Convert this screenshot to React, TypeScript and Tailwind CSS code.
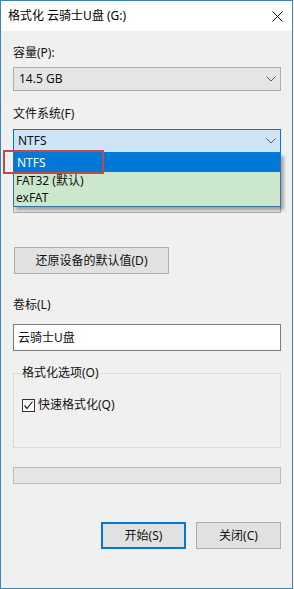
import React from 'react';

const font = { fontFamily: '"Noto Sans", "Noto Sans CJK SC", sans-serif' };

function Chevron() {
  return (
    <svg width="10" height="6" viewBox="0 0 10 6" className="shrink-0">
      <path d="M0.5 0.5 L5 5 L9.5 0.5" fill="none" stroke="#5a5a5a" strokeWidth="1" />
    </svg>
  );
}

export default function App() {
  return (
    <div
      className="w-[293px] h-[589px] border border-[#3a86b8] bg-[#f0f0f0] flex flex-col text-[12px] text-[#111] leading-[16px]"
      style={font}
    >
      {/* title bar */}
      <div className="h-[30px] bg-white flex items-center justify-between pl-[7px] pr-[9px] shrink-0">
        <span className="text-[12px] text-black">格式化 云骑士U盘 (G:)</span>
        <svg width="11" height="11" viewBox="0 0 11 11">
          <path d="M0.5 0.5 L10.5 10.5 M10.5 0.5 L0.5 10.5" stroke="#111" strokeWidth="1" />
        </svg>
      </div>

      <div className="flex flex-col pl-[12px] w-[280px]">
        <div className="mt-[14px] h-[16px]">容量(P):</div>
        <div className="mt-[6px] h-[24px] border border-[#adadad] bg-[#e5e5e5] flex items-center justify-between pl-[5px] pr-[4px]">
          <span>14.5 GB</span>
          <Chevron />
        </div>

        <div className="mt-[15px] h-[16px]">文件系统(F)</div>
        <div className="relative mt-[7px] h-[24px] z-10">
          <div className="h-[24px] border border-[#0078d7] bg-[#cce4f7] flex items-center justify-between pl-[4px] pr-[4px]">
            <span>NTFS</span>
            <Chevron />
          </div>
          <div className="absolute left-0 right-0 top-full border border-[#3d6f9c] bg-[#cce8cc] shadow-[3px_3px_3px_rgba(0,0,0,0.3)] flex flex-col">
            <div className="h-[18px] bg-[#0078d7] text-white flex items-center pl-[3px]">NTFS</div>
            <div className="h-[18px] flex items-center pl-[2px]">FAT32 (默认)</div>
            <div className="h-[16px] flex items-center pl-[2px]">exFAT</div>
          </div>
          <div className="absolute left-[-10px] top-[21px] w-[101px] h-[24px] border-2 border-[#c8474b]" />
        </div>

        {/* allocation unit row, hidden behind the open list */}
        <div className="mt-[15px] h-[16px]" />
        <div className="mt-[6px] h-[23px] border border-[#adadad] bg-[#e5e5e5]" />

        <button className="mt-[34px] ml-[1px] w-[155px] h-[27px] border border-[#adadad] bg-[#e1e1e1] flex items-center justify-center">
          还原设备的默认值(D)
        </button>

        <div className="mt-[23px] h-[16px]">卷标(L)</div>
        <div className="mt-[11px] h-[27px] border border-[#7a7a7a] bg-white flex items-center pl-[4px]">
          云骑士U盘
        </div>

        <div className="relative mt-[22px] h-[75px] border border-[#dcdcdc]">
          <span className="absolute left-[7px] top-[-9px] bg-[#f0f0f0] px-[1px]">格式化选项(O)</span>
          <div className="mt-[23px] ml-[8px] flex items-center gap-[3px]">
            <div className="w-[13px] h-[13px] border border-[#333] bg-white flex items-center justify-center">
              <svg width="11" height="11" viewBox="0 0 11 11">
                <path d="M1.5 5.5 L4 8.5 L9.5 1.5" fill="none" stroke="#222" strokeWidth="1.2" />
              </svg>
            </div>
            <span>快速格式化(Q)</span>
          </div>
        </div>

        <div className="mt-[19px] h-[17px] border border-[#bcbcbc] bg-[#e6e6e6]" />

        <div className="mt-[38px] flex justify-end gap-[10px]">
          <button className="w-[85px] h-[27px] border-2 border-[#0078d7] bg-[#e1e1e1] flex items-center justify-center">
            开始(S)
          </button>
          <button className="w-[85px] h-[27px] border border-[#adadad] bg-[#e1e1e1] flex items-center justify-center">
            关闭(C)
          </button>
        </div>
      </div>
    </div>
  );
}
